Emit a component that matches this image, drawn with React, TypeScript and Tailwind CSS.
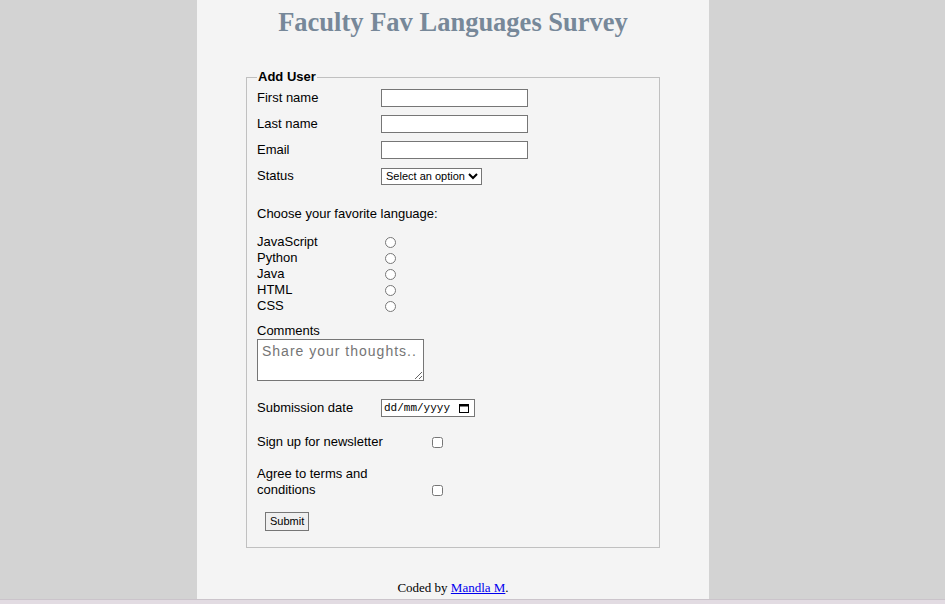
import { useState } from "react";

const languages = ["JavaScript", "Python", "Java", "HTML", "CSS"];

function Row({ label, children }: { label: string; children: React.ReactNode }) {
  return (
    <div className="flex h-[26px] items-center">
      <label className="w-[124px] shrink-0">{label}</label>
      {children}
    </div>
  );
}

export default function App() {
  const [lang, setLang] = useState("");

  return (
    <div className="flex h-[604px] flex-col bg-[#d3d3d3] font-['Liberation_Sans',Arial,sans-serif] text-[13px] text-black">
      <div className="flex justify-center pr-[39px]">
        <div className="flex h-[599px] w-[512px] flex-col bg-[#f4f4f4]">
          <h1 className="pt-[6px] text-center font-['Liberation_Serif','Times_New_Roman',serif] text-[26.5px] leading-[32px] font-bold text-[#778899]">
            Faculty Fav Languages Survey
          </h1>

          <form className="mx-[49px] mt-[31px]" onSubmit={(e) => e.preventDefault()}>
            <fieldset className="h-[479px] border border-[#c0c0c0] px-[10px]">
              <legend className="px-[1px] text-[13px] font-bold leading-[16px]">Add User</legend>

              <Row label="First name">
                <input type="text" className="h-[18px] w-[147px] border border-[#767676] bg-white px-1" />
              </Row>
              <Row label="Last name">
                <input type="text" className="h-[18px] w-[147px] border border-[#767676] bg-white px-1" />
              </Row>
              <Row label="Email">
                <input type="email" className="h-[18px] w-[147px] border border-[#767676] bg-white px-1" />
              </Row>
              <Row label="Status">
                <select className="h-[17px] border border-[#767676] bg-white text-[11px] leading-[15px]">
                  <option>Select an option</option>
                  <option>Student</option>
                  <option>Faculty</option>
                </select>
              </Row>

              <p className="mt-[17px] leading-[16px]">Choose your favorite language:</p>

              <div className="mt-[12px] flex flex-col">
                {languages.map((l) => (
                  <div key={l} className="flex h-[16px] items-center">
                    <label className="w-[128px] shrink-0">{l}</label>
                    <input
                      type="radio"
                      name="lang"
                      checked={lang === l}
                      onChange={() => setLang(l)}
                      className="m-0 h-[11px] w-[11px]"
                    />
                  </div>
                ))}
              </div>

              <label className="mt-[9px] block leading-[16px]">Comments</label>
              <textarea
                placeholder="Share your thoughts.."
                className="block h-[42px] w-[167px] border border-[#767676] bg-white px-1 py-[3px] text-[14px] leading-[16px] tracking-[1px] placeholder:text-[#757575]"
              />

              <div className="mt-[17px] flex h-[20px] items-center">
                <label className="w-[124px] shrink-0">Submission date</label>
                <div className="relative flex h-[18px] w-[94px] items-center justify-between border border-[#767676] bg-white pr-[5px] pl-[2px]">
                  <span className="font-['Liberation_Mono',monospace] text-[11px] leading-[14px]">dd/mm/yyyy</span>
                  {/* calendar glyph */}
                  <svg viewBox="0 0 10 10" className="h-[10px] w-[10px]">
                    <rect x="0.5" y="1.5" width="9" height="8" fill="none" stroke="#000" />
                    <rect x="0.5" y="1" width="9" height="2.5" fill="#000" />
                  </svg>
                  <input type="date" className="absolute inset-0 opacity-0" />
                </div>
              </div>

              <div className="mt-[16px] flex h-[16px] items-center">
                <label className="w-[175px] shrink-0">Sign up for newsletter</label>
                <input type="checkbox" className="m-0 h-[11px] w-[11px]" />
              </div>

              <div className="mt-[16px] flex items-end">
                <label className="w-[175px] shrink-0 pr-[50px] leading-[16px]">
                  Agree to terms and conditions
                </label>
                <input type="checkbox" className="m-0 mb-[2px] h-[11px] w-[11px]" />
              </div>

              <button
                type="submit"
                className="mt-[14px] ml-[8px] h-[19px] border border-[#767676] bg-[#efefef] px-[4px] text-[11px] leading-[15px]"
              >
                Submit
              </button>
            </fieldset>
          </form>

          <p className="mt-[30px] text-center font-['Liberation_Serif','Times_New_Roman',serif] text-[13px]">
            Coded by{" "}
            <a href="#" className="text-[#0000ee] underline">
              Mandla M
            </a>
            .
          </p>
        </div>
      </div>
      <div className="flex-1 border-t border-[#cbc4cb] bg-[#e2dbe2]" />
    </div>
  );
}
